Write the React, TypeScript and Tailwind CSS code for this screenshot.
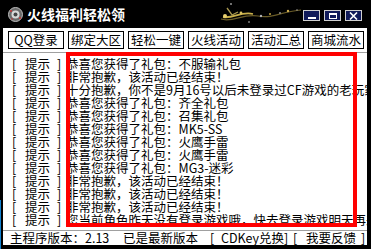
import React from "react";

const rows = [
  "恭喜您获得了礼包：不服输礼包",
  "非常抱歉，该活动已经结束！",
  "十分抱歉，你不是9月16号以后未登录过CF游戏的老玩家",
  "恭喜您获得了礼包：齐全礼包",
  "恭喜您获得了礼包：召集礼包",
  "恭喜您获得了礼包：MK5-SS",
  "恭喜您获得了礼包：火鹰手雷",
  "恭喜您获得了礼包：火鹰手雷",
  "恭喜您获得了礼包：MG3-迷彩",
  "非常抱歉，该活动已经结束！",
  "非常抱歉，该活动已经结束！",
  "非常抱歉，该活动已经结束！",
  "您当前角色昨天没有登录游戏哦，快去登录游戏明天再来吧",
];

const buttons = ["QQ登录", "绑定大区", "轻松一键", "火线活动", "活动汇总", "商城流水"];

function Logo() {
  return (
    <svg width="15" height="15" viewBox="0 0 15 15" className="shrink-0">
      <circle cx="7.5" cy="7.5" r="7" fill="#6b6b6b" stroke="#bdbdbd" strokeWidth="1" />
      <circle cx="7.5" cy="7.5" r="4" fill="#d9d9d9" />
      <circle cx="7.5" cy="7.5" r="2" fill="#444" />
      <circle cx="3" cy="4" r="1" fill="#c83030" />
      <circle cx="12" cy="11" r="1" fill="#c83030" />
      <circle cx="4" cy="12" r="0.8" fill="#c83030" />
    </svg>
  );
}

function Comet() {
  return (
    <svg width="90" height="26" viewBox="0 0 90 26" className="shrink-0">
      <path d="M8 18 C 20 22, 30 12, 45 15 S 70 10, 88 9" stroke="#6a5c28" strokeWidth="1.2" fill="none" />
      <path d="M10 16 C 20 18, 28 10, 40 13" stroke="#c9b04a" strokeWidth="1.8" fill="none" />
      <path d="M14 7 L 19 14 L 25 11" stroke="#a89850" strokeWidth="1.3" fill="none" />
      <circle cx="12" cy="15" r="2" fill="#e8d070" />
      <circle cx="28" cy="12" r="1.4" fill="#d8c060" />
      <circle cx="48" cy="15" r="1.2" fill="#b0b0b0" />
      <circle cx="57" cy="13" r="1" fill="#c0a040" />
      <circle cx="67" cy="12" r="1" fill="#909090" />
      <circle cx="75" cy="10" r="1.2" fill="#d0b050" />
      <circle cx="84" cy="9" r="0.8" fill="#a0a0a0" />
      <circle cx="18" cy="3" r="0.8" fill="#ffffff" />
      <circle cx="36" cy="21" r="0.7" fill="#ffffff" />
    </svg>
  );
}

function WinBtn({ kind }: { kind: "min" | "max" | "close" }) {
  return (
    <div className="w-[17px] h-[11px] bg-[#101a5a] border border-[#d0d0d0] flex items-center justify-center shrink-0">
      {kind === "min" && <div className="w-[8px] h-[2px] bg-white mt-[5px]" />}
      {kind === "max" && <div className="w-[8px] h-[6px] border border-white border-t-2" />}
      {kind === "close" && (
        <svg width="9" height="8" viewBox="0 0 9 8">
          <path d="M1 0.5 L8 7.5 M8 0.5 L1 7.5" stroke="white" strokeWidth="1.6" />
        </svg>
      )}
    </div>
  );
}

export default function App() {
  const font = { fontFamily: '"Noto Sans CJK SC", "Noto Sans", sans-serif' };
  return (
    <div className="w-[371px] h-[249px] bg-black relative overflow-hidden" style={font}>
      {/* title bar */}
      <div className="h-[28px] flex items-center pl-[8px] pr-[10px]">
        <Logo />
        <div className="ml-[4px] text-white font-bold text-[14px] leading-none whitespace-nowrap shrink-0">火线福利轻松领</div>
        <div className="ml-[88px] flex items-center shrink-0">
          <Comet />
        </div>
        <div className="ml-auto flex items-center gap-[4px] mt-[3px]">
          <WinBtn kind="min" />
          <WinBtn kind="max" />
          <WinBtn kind="close" />
        </div>
      </div>
      {/* body */}
      <div className="ml-[3px] mr-[4px] h-[217px] bg-white flex flex-col">
        <div className="flex gap-[4px] pl-[5px] pt-[3px]">
          {buttons.map((b) => (
            <div
              key={b}
              className="w-[56px] h-[18px] border border-black flex items-center justify-center text-[12.5px] leading-none text-black whitespace-nowrap shrink-0"
            >
              {b}
            </div>
          ))}
        </div>
        <div className="mt-[3px] h-[178px] border-t border-[#a0a0a0] pt-[5px] overflow-hidden">
          {rows.map((r, i) => (
            <div key={i} className="h-[13px] flex items-center text-[12.5px] leading-none text-black whitespace-nowrap">
              <span className="w-[10px] ml-[9px] shrink-0">[</span>
              <span className="w-[32px] ml-[3px] shrink-0">提示</span>
              <span className="w-[8px] shrink-0">]</span>
              <span className="ml-[1px] shrink-0">{r}</span>
            </div>
          ))}
        </div>
        <div className="flex-1 border-t border-[#a0a0a0] flex items-center text-[12.5px] leading-none text-black whitespace-nowrap">
          <span className="ml-[7px] w-[113px] shrink-0">主程序版本：2.13</span>
          <span className="w-[87px] shrink-0">已是最新版本</span>
          <span className="w-[11px] shrink-0">[</span>
          <span className="w-[63px] shrink-0">CDKey兑换</span>
          <span className="w-[9px] shrink-0">]</span>
          <span className="w-[13px] shrink-0">[</span>
          <span className="w-[55px] shrink-0">我要反馈</span>
          <span className="shrink-0">]</span>
        </div>
      </div>
      {/* red annotation */}
      <div className="absolute left-[66px] top-[52px] w-[291px] h-[175px] border-[4px] border-[#ff0000]" />
      <div className="absolute left-0 top-[200px] w-[1px] h-[49px] bg-[#1080d0]" />
    </div>
  );
}
